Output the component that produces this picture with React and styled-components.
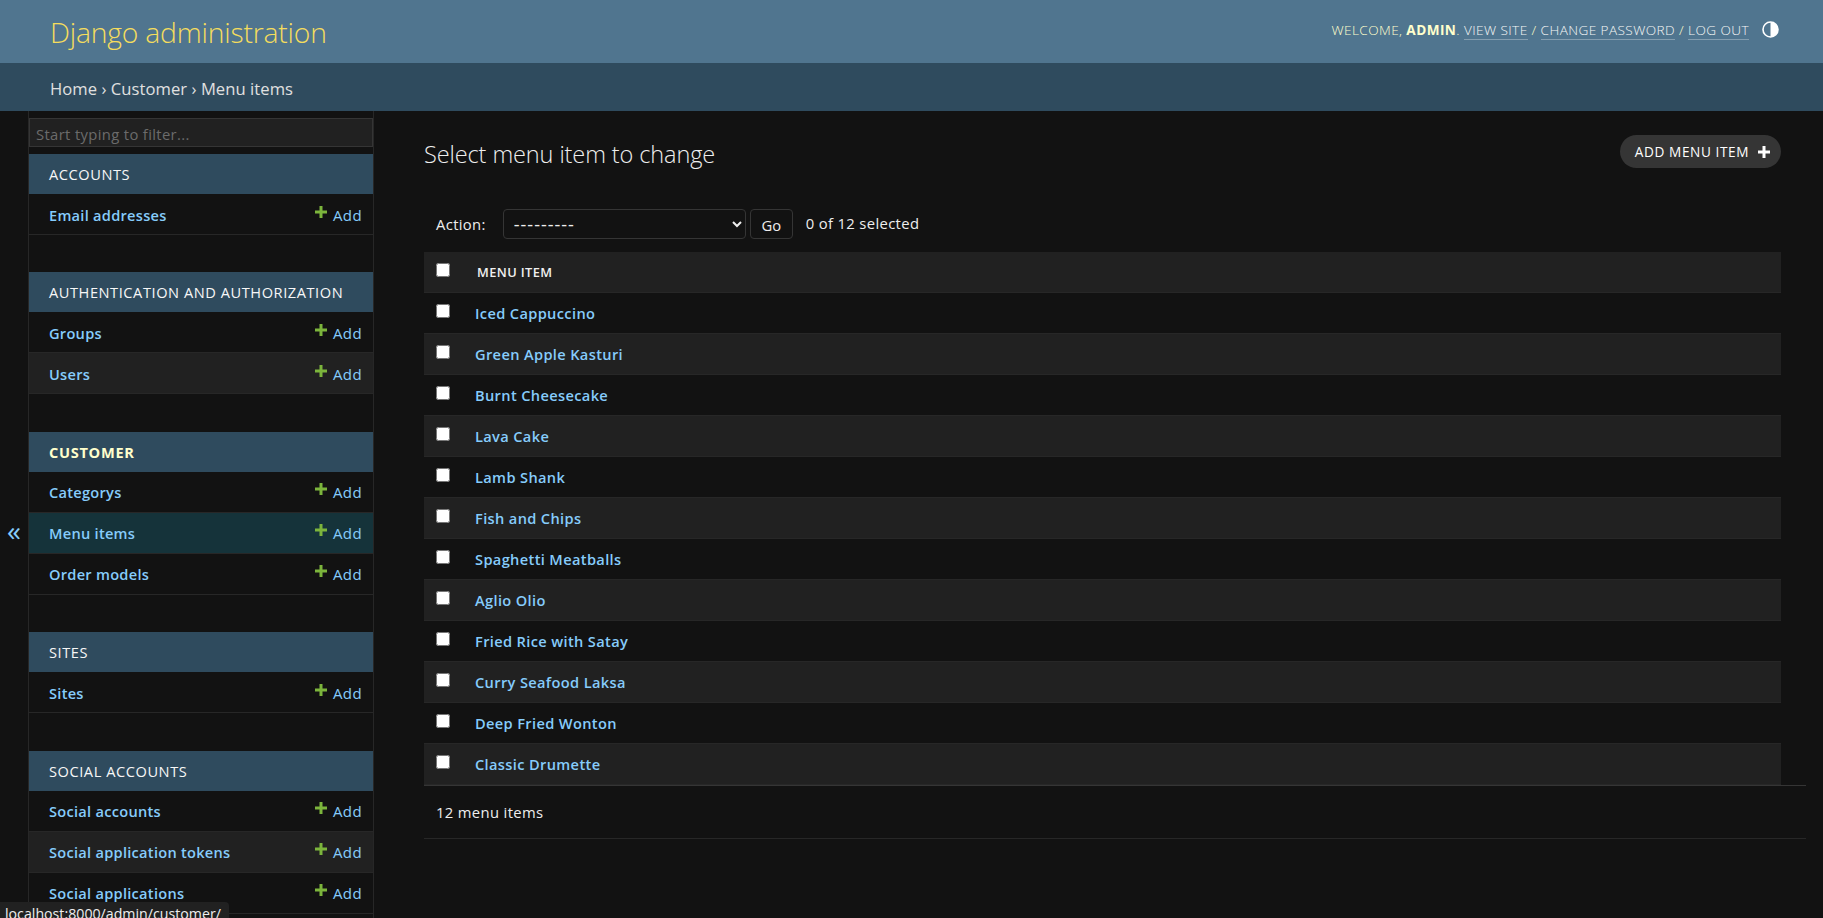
import React from "react";
import styled, { createGlobalStyle } from "styled-components";

const GlobalStyle = createGlobalStyle`
  html, body {
    margin: 0;
    height: 100%;
    overflow: hidden;
    background: #121212;
    color: #eeeeee;
    font-family: "Open Sans", "Noto Sans", sans-serif;
  }
  * { box-sizing: border-box; }
`;

const Page = styled.div`
  position: relative;
  height: 918px;
  overflow: hidden;
  display: flex;
  flex-direction: column;
`;

const Header = styled.header`
  height: 63px;
  flex: none;
  background: #50758f;
  display: flex;
  align-items: center;
  justify-content: space-between;
  padding: 0 44px 0 50px;
`;

const Branding = styled.h1`
  margin: 0;
  font-size: 28.3px;
  font-weight: 300;
  letter-spacing: -0.2px;
  color: #f5dd5d;
`;

const UserTools = styled.div`
  display: flex;
  align-items: center;
  font-size: 13.6px;
  font-weight: 300;
  letter-spacing: 0.42px;
  color: #ffffcc;
  white-space: pre;
  padding-bottom: 4px;
  b {
    font-weight: 700;
  }
`;

const UserLink = styled.a`
  color: #f5f5f5;
  border-bottom: 1px solid rgba(255, 255, 255, 0.3);
`;

const ThemeIcon = styled.svg`
  width: 17px;
  height: 17px;
  margin-left: 13px;
`;

const Breadcrumbs = styled.div`
  height: 48px;
  flex: none;
  background: #2f4b5e;
  display: flex;
  align-items: center;
  padding: 2px 50px 0;
  font-size: 16.6px;
  letter-spacing: 0.05px;
  color: #e0e0e0;
  white-space: pre;
`;

const Body = styled.div`
  flex: 1;
  display: flex;
  min-height: 0;
`;

const Toggle = styled.div`
  width: 28px;
  flex: none;
  display: flex;
  align-items: center;
  justify-content: center;
  font-size: 28px;
  color: #86ccfb;
  padding-top: 31px;
`;

const Sidebar = styled.nav`
  width: 346px;
  flex: none;
  border-left: 1px solid #272727;
  border-right: 1px solid #272727;
  padding-top: 7px;
  overflow: hidden;
`;

const Filter = styled.input`
  display: block;
  width: 100%;
  height: 29px;
  margin: 0 0 7px;
  padding: 2px 6px 0;
  background: #212121;
  border: 1px solid #353535;
  color: #eeeeee;
  font-family: inherit;
  font-size: 14.8px;
  letter-spacing: 0.35px;
  &::placeholder {
    color: #6b6b6b;
    opacity: 1;
  }
`;

const Section = styled.section`
  margin-bottom: 37.4px;
`;

const Caption = styled.div`
  height: 40px;
  background: #2f4b5e;
  display: flex;
  align-items: center;
  padding-left: 20px;
  font-size: 14.6px;
  letter-spacing: ${(p) => (p.$current ? "0.7px" : "0.56px")};
  font-weight: ${(p) => (p.$current ? 700 : 400)};
  color: ${(p) => (p.$current ? "#ffffcc" : "#f7f7f7")};
`;

const ModelRow = styled.div`
  height: 41px;
  display: flex;
  align-items: center;
  justify-content: space-between;
  padding: 1px 11px 0 20px;
  border-bottom: 1px solid #272727;
  background: ${(p) =>
    p.$selected ? "#15333a" : p.$alt ? "#212121" : "transparent"};
`;

const ModelLink = styled.a`
  font-size: 14.6px;
  font-weight: 600;
  letter-spacing: 0.27px;
  color: #86ccfb;
`;

const AddLink = styled.a`
  display: flex;
  align-items: center;
  font-size: 15px;
  letter-spacing: 0.4px;
  color: #86ccfb;
`;

const PlusIcon = styled.svg`
  width: ${(p) => p.$size}px;
  height: ${(p) => p.$size}px;
  margin-right: 6px;
  position: relative;
  top: -3px;
`;

const Main = styled.main`
  flex: 1;
  min-width: 0;
  padding: 0 17px 0 50px;
`;

const TitleRow = styled.div`
  display: flex;
  align-items: flex-start;
  justify-content: space-between;
  height: 98px;
  padding: 24px 25px 0 0;
`;

const Title = styled.h1`
  margin: 0;
  font-size: 23.5px;
  font-weight: 300;
  letter-spacing: -0.1px;
  line-height: 38px;
  color: #eeeeee;
`;

const ObjectTool = styled.a`
  height: 33px;
  display: flex;
  align-items: center;
  padding: 0 11px 0 15px;
  border-radius: 17px;
  background: #353535;
  color: #ffffff;
  font-size: 13.6px;
  letter-spacing: 0.6px;
  ${PlusIcon} {
    margin: 0 0 0 9px;
    top: 0;
  }
`;

const Actions = styled.div`
  display: flex;
  align-items: center;
  height: 30px;
  margin-bottom: 13px;
  padding-left: 12px;
  font-size: 14.8px;
  letter-spacing: 0.35px;
`;

const ActionSelect = styled.select`
  width: 243px;
  height: 30px;
  margin-left: 17px;
  padding: 0 6px;
  background: #121212;
  border: 1px solid #353535;
  border-radius: 4px;
  color: #eeeeee;
  font-family: inherit;
  font-size: 18px;
  letter-spacing: 1px;
  color-scheme: dark;
`;

const GoButton = styled.button`
  width: 43px;
  height: 30px;
  margin-left: 4px;
  background: #121212;
  border: 1px solid #353535;
  border-radius: 4px;
  color: #eeeeee;
  font-family: inherit;
  font-size: 14.8px;
  padding: 2px 0 0;
`;

const Counter = styled.span`
  margin-left: 13px;
  position: relative;
  top: -1px;
`;

const Table = styled.table`
  width: calc(100% - 25px);
  border-collapse: collapse;
  table-layout: fixed;
`;

const Row = styled.tr`
  height: ${(p) => (p.$head ? "40px" : "41px")};
  background: ${(p) => (p.$alt ? "#212121" : "transparent")};
  border-bottom: 1px solid #272727;
`;

const CheckCell = styled.td`
  width: 51px;
  padding: 11px 0 0 12px;
  vertical-align: top;
`;

const Check = styled.input`
  display: block;
  width: 14px;
  height: 14px;
  margin: 0;
`;

const NameCell = styled.td`
  padding: 1px 0 0;
  font-size: 14.6px;
  font-weight: 600;
  letter-spacing: 0.36px;
  color: #86ccfb;
`;

const HeadCell = styled.th`
  padding: 0 0 0 2px;
  text-align: left;
  font-size: 12.8px;
  font-weight: 600;
  letter-spacing: 0.4px;
  color: #f0f0f0;
`;

const Paginator = styled.div`
  height: 54px;
  display: flex;
  align-items: center;
  padding-left: 12px;
  font-size: 14.8px;
  letter-spacing: 0.35px;
  border-top: 1px solid #353535;
  border-bottom: 1px solid #272727;
`;

const StatusBar = styled.div`
  position: absolute;
  left: 0;
  bottom: 0;
  height: 16px;
  width: 229px;
  padding: 2px 0 0 5px;
  background: #212121;
  border-top-right-radius: 4px;
  font-size: 14.2px;
  line-height: 20px;
  color: #eeeeee;
  overflow: hidden;
`;

const Plus = ({ color, size = 12 }) => (
  <PlusIcon $size={size} viewBox="0 0 12 12">
    <path d="M4.5 0h3v4.5H12v3H7.5V12h-3V7.5H0v-3h4.5z" fill={color} />
  </PlusIcon>
);

const sections = [
  { name: "ACCOUNTS", models: ["Email addresses"] },
  { name: "AUTHENTICATION AND AUTHORIZATION", models: ["Groups", "Users"] },
  {
    name: "CUSTOMER",
    current: true,
    models: ["Categorys", "Menu items", "Order models"],
  },
  { name: "SITES", models: ["Sites"] },
  {
    name: "SOCIAL ACCOUNTS",
    models: ["Social accounts", "Social application tokens", "Social applications"],
  },
];

const menuItems = [
  "Iced Cappuccino",
  "Green Apple Kasturi",
  "Burnt Cheesecake",
  "Lava Cake",
  "Lamb Shank",
  "Fish and Chips",
  "Spaghetti Meatballs",
  "Aglio Olio",
  "Fried Rice with Satay",
  "Curry Seafood Laksa",
  "Deep Fried Wonton",
  "Classic Drumette",
];

const App = () => {
  return (
    <Page>
      <GlobalStyle />
      <Header>
        <Branding>Django administration</Branding>
        <UserTools>
          WELCOME, <b>ADMIN</b>. <UserLink>VIEW SITE</UserLink> /{" "}
          <UserLink>CHANGE PASSWORD</UserLink> / <UserLink>LOG OUT</UserLink>
          <ThemeIcon viewBox="0 0 17 17">
            <circle cx="8.5" cy="8.5" r="7.5" fill="none" stroke="#fff" strokeWidth="1.6" />
            <path d="M8.5 1a7.5 7.5 0 0 1 0 15z" fill="#fff" />
          </ThemeIcon>
        </UserTools>
      </Header>
      <Breadcrumbs>Home › Customer › Menu items</Breadcrumbs>
      <Body>
        <Toggle>«</Toggle>
        <Sidebar>
          <Filter placeholder="Start typing to filter..." />
          {sections.map((section) => (
            <Section key={section.name}>
              <Caption $current={section.current}>{section.name}</Caption>
              {section.models.map((model, i) => (
                <ModelRow
                  key={model}
                  $alt={i % 2 === 1}
                  $selected={model === "Menu items"}
                >
                  <ModelLink>{model}</ModelLink>
                  <AddLink>
                    <Plus color="#7cb53c" />
                    Add
                  </AddLink>
                </ModelRow>
              ))}
            </Section>
          ))}
        </Sidebar>
        <Main>
          <TitleRow>
            <Title>Select menu item to change</Title>
            <ObjectTool>
              ADD MENU ITEM
              <Plus color="#ffffff" />
            </ObjectTool>
          </TitleRow>
          <Actions>
            Action:
            <ActionSelect defaultValue="">
              <option value="">---------</option>
            </ActionSelect>
            <GoButton>Go</GoButton>
            <Counter>0 of 12 selected</Counter>
          </Actions>
          <Table>
            <thead>
              <Row $alt $head>
                <CheckCell as="th">
                  <Check type="checkbox" />
                </CheckCell>
                <HeadCell>MENU ITEM</HeadCell>
              </Row>
            </thead>
            <tbody>
              {menuItems.map((item, i) => (
                <Row key={item} $alt={i % 2 === 1}>
                  <CheckCell>
                    <Check type="checkbox" />
                  </CheckCell>
                  <NameCell>{item}</NameCell>
                </Row>
              ))}
            </tbody>
          </Table>
          <Paginator>12 menu items</Paginator>
        </Main>
      </Body>
      <StatusBar>localhost:8000/admin/customer/</StatusBar>
    </Page>
  );
};

export default App;
